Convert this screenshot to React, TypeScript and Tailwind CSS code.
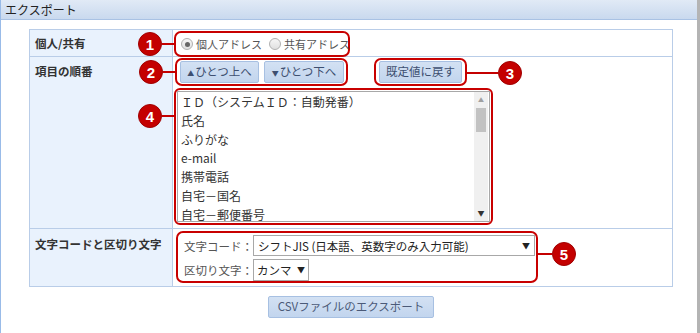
import React from 'react'

const jp = '[font-family:"Noto_Sans_CJK_JP","Noto_Sans",sans-serif]'

function Callout({ n, side, line, top }: { n: number; side: 'left' | 'right'; line: number; top: string }) {
  // red numbered marker with a connector to the box
  return (
    <div
      className={`absolute flex items-center ${top} ${side === 'left' ? 'right-full flex-row' : 'left-full flex-row-reverse'}`}
    >
      <div className="w-[24px] h-[24px] rounded-full bg-[#c40000] border border-[#a00000] flex items-center justify-center text-white font-bold text-[15px] leading-none [font-family:'Liberation_Sans',Arial,sans-serif]">
        {n}
      </div>
      <div className="h-[2px] bg-[#c40000]" style={{ width: line }} />
    </div>
  )
}

function Btn({ children, className = '' }: { children: React.ReactNode; className?: string }) {
  return (
    <div
      className={`h-[22px] flex items-center justify-center whitespace-nowrap leading-none rounded-[2px] border border-[#a7c0e2] bg-gradient-to-b from-[#d3e1f3] to-[#c2d5ee] text-[#3d4f70] text-[11.5px] ${className}`}
    >
      {children}
    </div>
  )
}

function Radio({ checked, label }: { checked?: boolean; label: string }) {
  return (
    <div className="flex items-center gap-[3px] whitespace-nowrap">
      <div className="w-[12px] h-[12px] rounded-full border border-[#b0b0b0] bg-gradient-to-b from-[#f6f6f6] to-[#e0e0e0] flex items-center justify-center">
        {checked && <div className="w-[5px] h-[5px] rounded-full bg-[#666]" />}
      </div>
      <span>{label}</span>
    </div>
  )
}

const items = ['ＩＤ（システムＩＤ：自動発番）', '氏名', 'ふりがな', 'e-mail', '携帯電話', '自宅－国名', '自宅－郵便番号']

export default function App() {
  return (
    <div className={`w-[700px] h-[333px] bg-white flex overflow-hidden text-[#333] leading-[16px] ${jp}`}>
      <div className="w-[697px] h-full border-l border-[#99bbe8] flex flex-col">
        <div className="h-[20px] shrink-0 flex items-center px-[4px] border-b border-[#a9c2e4] bg-gradient-to-b from-[#e1eaf6] to-[#c9d9ee] text-[12px] text-[#222]">
          エクスポート
        </div>

        <div className="pt-[9px] pl-[28px]">
          <div className="w-[644px] border border-[#b9cde8] text-[11.5px]">
            {/* row 1 */}
            <div className="flex h-[27px] border-b border-[#b9cde8]">
              <div className="w-[143px] shrink-0 bg-[#e9f2fd] border-r border-[#b9cde8] pl-[5px] pt-[5px] font-bold">
                個人/共有
              </div>
              <div className="pl-[1px] pt-[1px]">
                <div className="relative w-[176px] h-[26px] border-2 border-[#c80000] rounded-[7px] flex items-center gap-[7px] pl-[5px] text-[#555] text-[11px]">
                  <Callout n={1} side="left" line={14} top="top-[-1px]" />
                  <Radio checked label="個人アドレス" />
                  <Radio label="共有アドレス" />
                </div>
              </div>
            </div>

            {/* row 2 */}
            <div className="flex h-[172px] border-b border-[#b9cde8]">
              <div className="w-[143px] shrink-0 bg-[#e9f2fd] border-r border-[#b9cde8] pl-[5px] pt-[6px] font-bold">
                項目の順番
              </div>
              <div className="pl-[1px] pt-[1px] flex flex-col gap-[2px]">
                <div className="flex items-start gap-[26px] pl-[1px]">
                  <div className="relative w-[173px] h-[28px] border-2 border-[#c80000] rounded-[7px] flex items-center gap-[5px] pl-[3px]">
                    <Callout n={2} side="left" line={14} top="top-[0px]" />
                    <Btn className="w-[79px]">
                      <span className="text-[7px] mr-[1px] mt-[2px]">▲</span>ひとつ上へ
                    </Btn>
                    <Btn className="w-[80px]">
                      <span className="text-[7px] mr-[1px] mt-[2px]">▼</span>ひとつ下へ
                    </Btn>
                  </div>
                  <div className="relative w-[93px] h-[28px] border-2 border-[#c80000] rounded-[7px] flex items-center justify-center">
                    <Callout n={3} side="right" line={33} top="top-[1px]" />
                    <Btn className="w-[83px]">既定値に戻す</Btn>
                  </div>
                </div>
                <div className="relative w-[319px] h-[137px] border-2 border-[#c80000] rounded-[6px] p-[1px]">
                  <Callout n={4} side="left" line={14} top="top-[14px]" />
                  <div className="w-full h-full border border-[#a8a8a8] flex">
                    <div className="flex-1 flex flex-col pl-[3px] pt-[1px]">
                      {items.map((t) => (
                        <div key={t} className="h-[18.8px] leading-[18.8px] whitespace-nowrap text-[12px] text-[#333]">
                          {t}
                        </div>
                      ))}
                    </div>
                    <div className="w-[14px] bg-[#f0f0f0] flex flex-col items-center justify-between py-[4px] mr-[1px]">
                      <div className="flex flex-col items-center w-full">
                        <span className="text-[6px] text-[#a0a0a0] leading-[8px]">▲</span>
                        <div className="w-[10px] h-[24px] bg-[#c2c2c2] mt-[4px]" />
                      </div>
                      <span className="text-[7px] text-[#333] leading-[8px]">▼</span>
                    </div>
                  </div>
                </div>
              </div>
            </div>

            {/* row 3 */}
            <div className="flex h-[57px]">
              <div className="w-[143px] shrink-0 bg-[#e9f2fd] border-r border-[#b9cde8] pl-[5px] pt-[7px] font-bold whitespace-nowrap">
                文字コードと区切り文字
              </div>
              <div className="pl-[3px] pt-[2px]">
                <div className="relative w-[362px] h-[52px] border-2 border-[#c80000] rounded-[7px] flex flex-col gap-[3px] pl-[6px] pt-[2px]">
                  <Callout n={5} side="right" line={16} top="top-[9px]" />
                  <div className="flex items-center">
                    <span className="w-[69px] shrink-0 whitespace-nowrap text-[#555]">文字コード：</span>
                    <div className="w-[282px] h-[21px] border border-[#a8a8a8] flex items-center justify-between pl-[4px] pr-[4px] text-[#222] whitespace-nowrap">
                      <span>シフトJIS (日本語、英数字のみ入力可能)</span>
                      <span className="text-[8px]">▼</span>
                    </div>
                  </div>
                  <div className="flex items-center">
                    <span className="w-[69px] shrink-0 whitespace-nowrap text-[#555]">区切り文字：</span>
                    <div className="w-[56px] h-[22px] border border-[#a8a8a8] flex items-center justify-between pl-[3px] pr-[3px] text-[#222] whitespace-nowrap">
                      <span>カンマ</span>
                      <span className="text-[8px]">▼</span>
                    </div>
                  </div>
                </div>
              </div>
            </div>
          </div>

          <div className="w-[644px] flex justify-center pt-[9px]">
            <Btn className="w-[166px] h-[22px] text-[#4b5a78]">CSVファイルのエクスポート</Btn>
          </div>
        </div>
      </div>
      <div className="w-[3px] h-full bg-[#b4b4b4]" />
    </div>
  )
}
